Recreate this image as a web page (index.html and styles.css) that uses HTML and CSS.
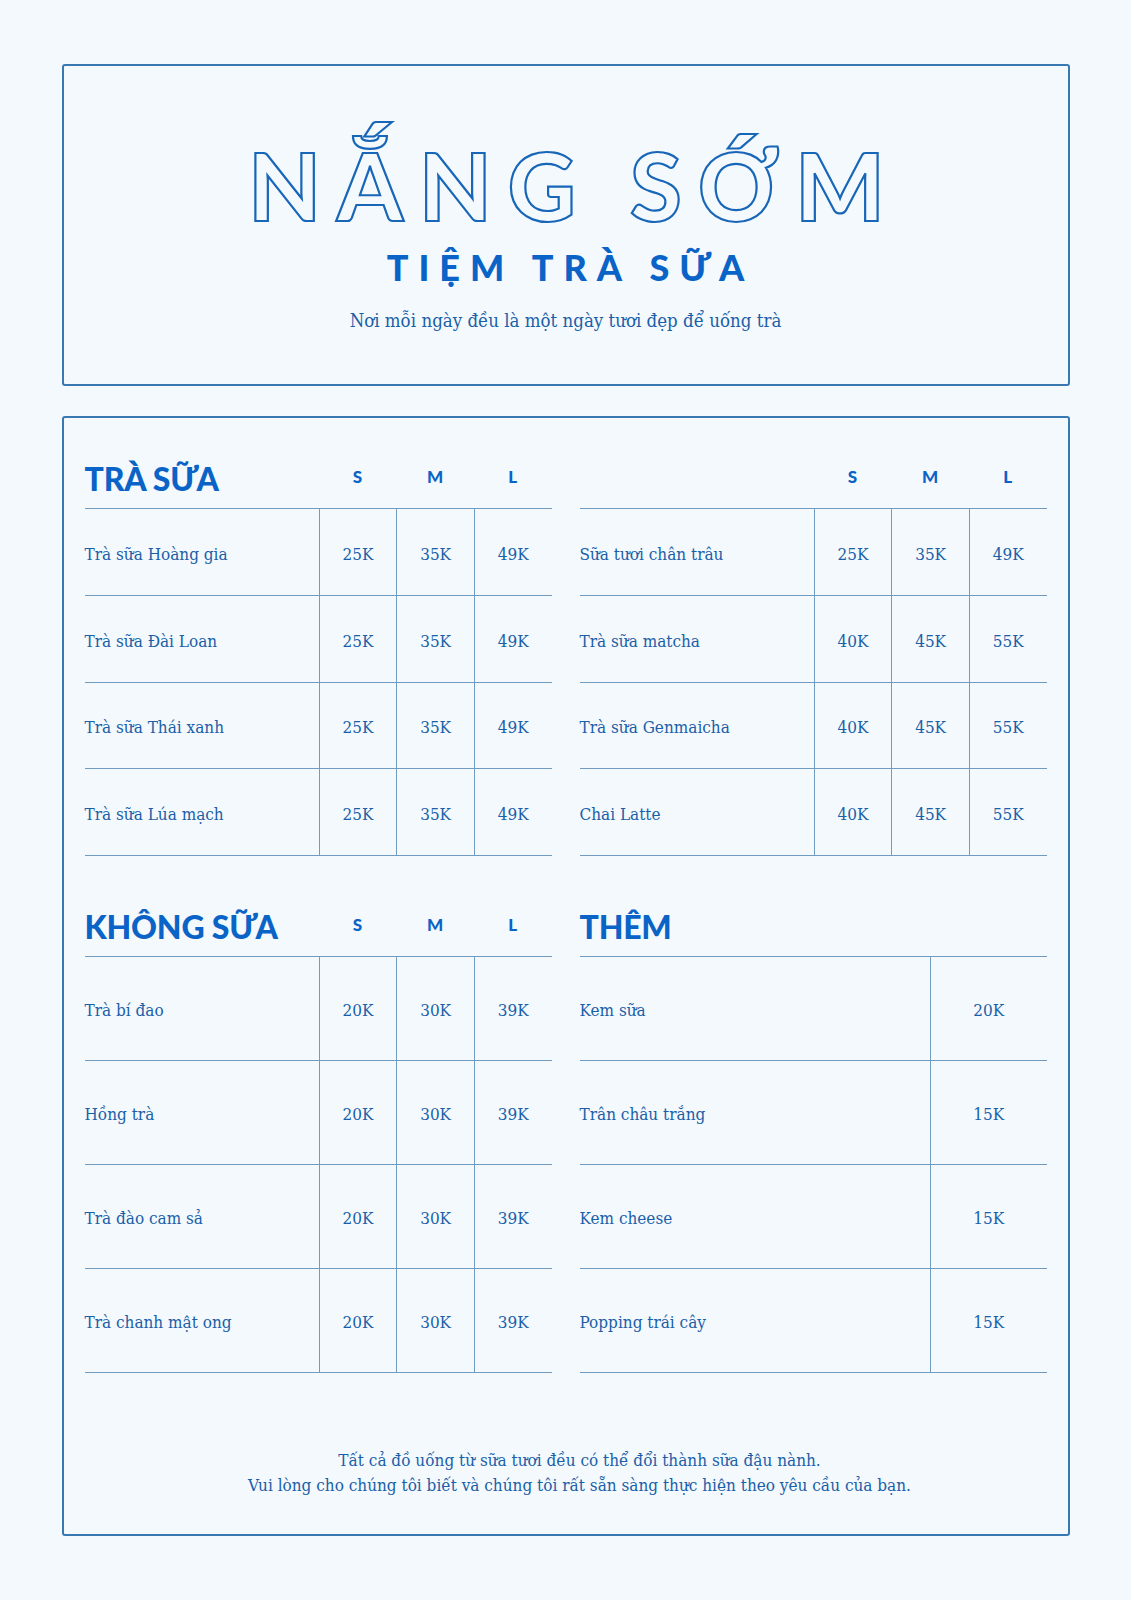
FILE: index.html
```html
<!DOCTYPE html>
<html lang="vi">
<head>
<meta charset="utf-8">
<title>Nắng Sớm – Tiệm trà sữa</title>
<link rel="stylesheet" href="styles.css">
</head>
<body>
<div class="page">
  <header class="card hero">
    <h1 class="brand">NẮNG SỚM</h1>
    <div class="sub">TIỆM TRÀ SỮA</div>
    <p class="tagline">Nơi mỗi ngày đều là một ngày tươi đẹp để uống trà</p>
  </header>

  <main class="card menu">
    <div class="grid">
      <section class="sec sec-a">
        <div class="head">
          <h2 class="title">TRÀ SỮA</h2>
          <span class="size">S</span><span class="size">M</span><span class="size">L</span>
        </div>
        <div class="row"><span class="name">Trà sữa Hoàng gia</span><span class="price">25K</span><span class="price">35K</span><span class="price">49K</span></div>
        <div class="row"><span class="name">Trà sữa Đài Loan</span><span class="price">25K</span><span class="price">35K</span><span class="price">49K</span></div>
        <div class="row"><span class="name">Trà sữa Thái xanh</span><span class="price">25K</span><span class="price">35K</span><span class="price">49K</span></div>
        <div class="row"><span class="name">Trà sữa Lúa mạch</span><span class="price">25K</span><span class="price">35K</span><span class="price">49K</span></div>
      </section>

      <section class="sec sec-a">
        <div class="head">
          <h2 class="title"></h2>
          <span class="size">S</span><span class="size">M</span><span class="size">L</span>
        </div>
        <div class="row"><span class="name">Sữa tươi chân trâu</span><span class="price">25K</span><span class="price">35K</span><span class="price">49K</span></div>
        <div class="row"><span class="name">Trà sữa matcha</span><span class="price">40K</span><span class="price">45K</span><span class="price">55K</span></div>
        <div class="row"><span class="name">Trà sữa Genmaicha</span><span class="price">40K</span><span class="price">45K</span><span class="price">55K</span></div>
        <div class="row"><span class="name">Chai Latte</span><span class="price">40K</span><span class="price">45K</span><span class="price">55K</span></div>
      </section>

      <section class="sec sec-b">
        <div class="head">
          <h2 class="title">KHÔNG SỮA</h2>
          <span class="size">S</span><span class="size">M</span><span class="size">L</span>
        </div>
        <div class="row"><span class="name">Trà bí đao</span><span class="price">20K</span><span class="price">30K</span><span class="price">39K</span></div>
        <div class="row"><span class="name">Hồng trà</span><span class="price">20K</span><span class="price">30K</span><span class="price">39K</span></div>
        <div class="row"><span class="name">Trà đào cam sả</span><span class="price">20K</span><span class="price">30K</span><span class="price">39K</span></div>
        <div class="row"><span class="name">Trà chanh mật ong</span><span class="price">20K</span><span class="price">30K</span><span class="price">39K</span></div>
      </section>

      <section class="sec sec-b extra">
        <div class="head">
          <h2 class="title">THÊM</h2>
        </div>
        <div class="row"><span class="name">Kem sữa</span><span class="price">20K</span></div>
        <div class="row"><span class="name">Trân châu trắng</span><span class="price">15K</span></div>
        <div class="row"><span class="name">Kem cheese</span><span class="price">15K</span></div>
        <div class="row"><span class="name">Popping trái cây</span><span class="price">15K</span></div>
      </section>
    </div>

    <p class="note">Tất cả đồ uống từ sữa tươi đều có thể đổi thành sữa đậu nành.<br>Vui lòng cho chúng tôi biết và chúng tôi rất sẵn sàng thực hiện theo yêu cầu của bạn.</p>
  </main>
</div>
</body>
</html>
```

FILE: styles.css
```css
* { box-sizing: border-box; }

html, body {
  margin: 0;
  padding: 0;
  background: #f4f9fd;
}

body {
  color: #1a60a8;
  font-family: "DejaVu Serif Condensed", "DejaVu Serif", "Liberation Serif", serif;
}

.page {
  width: 1008px;
  margin: 0 auto;
  padding: 64px 0 66px;
}

.card {
  border: 2px solid #3a78b2;
  border-radius: 3px;
}

/* ---------- hero ---------- */
.hero {
  height: 322px;
  padding: 72px 0 0;
  text-align: center;
}

.brand {
  margin: 0;
  font-family: "Lato", "Noto Sans", sans-serif;
  font-weight: 900;
  font-size: 94px;
  line-height: 94px;
  letter-spacing: 16px;
  padding-left: 18px;
  color: transparent;
  -webkit-text-stroke: 2.2px #1866b8;
}

.sub {
  margin-top: 17px;
  font-family: "Lato", "Noto Sans", sans-serif;
  font-weight: 900;
  font-size: 36px;
  line-height: 36px;
  letter-spacing: 10px;
  padding-left: 10px;
  color: #0a63c6;
}

.tagline {
  margin: 25px 0 0;
  font-size: 18.5px;
  line-height: 22px;
  color: #1a60a8;
}

/* ---------- menu ---------- */
.menu {
  margin-top: 30px;
  padding: 31px 21px 36px;
}

.grid {
  display: grid;
  grid-template-columns: 467px 467px;
  column-gap: 28px;
  row-gap: 41px;
}

.head {
  display: grid;
  grid-template-columns: 1fr repeat(3, 77.6px);
  align-items: center;
  height: 60px;
  border-bottom: 1px solid #6f9cc0;
}

.title {
  margin: 0;
  font-family: "Lato", "Noto Sans", sans-serif;
  font-weight: 900;
  font-size: 32px;
  line-height: 32px;
  color: #0a63c6;
  letter-spacing: -0.2px;
}

.size {
  text-align: center;
  font-family: "Lato", "Noto Sans", sans-serif;
  font-weight: 900;
  font-size: 17px;
  color: #0a63c6;
  padding-bottom: 4px;
}

.row {
  display: grid;
  grid-template-columns: 1fr repeat(3, 77.6px);
  align-items: stretch;
  border-bottom: 1px solid #6f9cc0;
  font-size: 17px;
}

.sec-a .row { height: 86.75px; }
.sec-b .row { height: 103.9px; }

.extra .head,
.extra .row { grid-template-columns: 1fr 116.5px; }

.name {
  display: flex;
  align-items: center;
  padding-top: 4px;
}

.price {
  display: flex;
  align-items: center;
  justify-content: center;
  padding-top: 4px;
  border-left: 1px solid #6f9cc0;
}

.note {
  margin: 75px 0 0;
  padding-left: 28px;
  text-align: center;
  font-size: 17px;
  line-height: 25px;
}
```
